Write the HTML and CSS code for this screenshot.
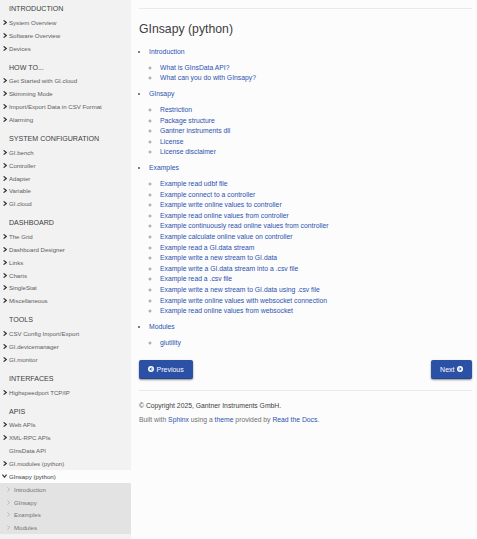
FILE: index.html
```html
<!DOCTYPE html>
<html lang="en">
<head>
  <meta charset="UTF-8">
  <title>GInsapy (python)</title>
  <link rel="stylesheet" href="styles.css">
</head>
<body>

  <!-- side navigation -->
  <nav class="side-nav">
    <p class="caption first">INTRODUCTION</p>
    <ul class="menu">
      <li><a href="#"><i class="chev"></i>System Overview</a></li>
      <li><a href="#"><i class="chev"></i>Software Overview</a></li>
      <li><a href="#"><i class="chev"></i>Devices</a></li>
    </ul>

    <p class="caption">HOW TO...</p>
    <ul class="menu">
      <li><a href="#"><i class="chev"></i>Get Started with GI.cloud</a></li>
      <li><a href="#"><i class="chev"></i>Skimming Mode</a></li>
      <li><a href="#"><i class="chev"></i>Import/Export Data in CSV Format</a></li>
      <li><a href="#"><i class="chev"></i>Alarming</a></li>
    </ul>

    <p class="caption">SYSTEM CONFIGURATION</p>
    <ul class="menu">
      <li><a href="#"><i class="chev"></i>GI.bench</a></li>
      <li><a href="#"><i class="chev"></i>Controller</a></li>
      <li><a href="#"><i class="chev"></i>Adapter</a></li>
      <li><a href="#"><i class="chev"></i>Variable</a></li>
      <li><a href="#"><i class="chev"></i>GI.cloud</a></li>
    </ul>

    <p class="caption">DASHBOARD</p>
    <ul class="menu">
      <li><a href="#"><i class="chev"></i>The Grid</a></li>
      <li><a href="#"><i class="chev"></i>Dashboard Designer</a></li>
      <li><a href="#"><i class="chev"></i>Links</a></li>
      <li><a href="#"><i class="chev"></i>Charts</a></li>
      <li><a href="#"><i class="chev"></i>SingleStat</a></li>
      <li><a href="#"><i class="chev"></i>Miscellaneous</a></li>
    </ul>

    <p class="caption">TOOLS</p>
    <ul class="menu">
      <li><a href="#"><i class="chev"></i>CSV Config Import/Export</a></li>
      <li><a href="#"><i class="chev"></i>GI.devicemanager</a></li>
      <li><a href="#"><i class="chev"></i>GI.monitor</a></li>
    </ul>

    <p class="caption">INTERFACES</p>
    <ul class="menu">
      <li><a href="#"><i class="chev"></i>Highspeedport TCP/IP</a></li>
    </ul>

    <p class="caption">APIS</p>
    <ul class="menu">
      <li><a href="#"><i class="chev"></i>Web APIs</a></li>
      <li><a href="#"><i class="chev"></i>XML-RPC APIs</a></li>
      <li><a href="#"><i class="chev blank"></i>GInsData API</a></li>
      <li><a href="#"><i class="chev"></i>GI.modules (python)</a></li>
      <li class="current">
        <a href="#"><i class="chev down"></i>GInsapy (python)</a>
        <ul class="sub">
          <li><a href="#"><i class="chev thin"></i>Introduction</a></li>
          <li><a href="#"><i class="chev thin"></i>GInsapy</a></li>
          <li><a href="#"><i class="chev thin"></i>Examples</a></li>
          <li><a href="#"><i class="chev thin"></i>Modules</a></li>
        </ul>
      </li>
    </ul>
  </nav>

  <main class="content">
    <hr class="top-rule">
    <h1>GInsapy (python)</h1>

    <ul class="toc">
      <li><a href="#">Introduction</a>
        <ul>
          <li><a href="#">What is GInsData API?</a></li>
          <li><a href="#">What can you do with GInsapy?</a></li>
        </ul>
      </li>
      <li><a href="#">GInsapy</a>
        <ul>
          <li><a href="#">Restriction</a></li>
          <li><a href="#">Package structure</a></li>
          <li><a href="#">Gantner instruments dll</a></li>
          <li><a href="#">License</a></li>
          <li><a href="#">License disclaimer</a></li>
        </ul>
      </li>
      <li><a href="#">Examples</a>
        <ul>
          <li><a href="#">Example read udbf file</a></li>
          <li><a href="#">Example connect to a controller</a></li>
          <li><a href="#">Example write online values to controller</a></li>
          <li><a href="#">Example read online values from controller</a></li>
          <li><a href="#">Example continuously read online values from controller</a></li>
          <li><a href="#">Example calculate online value on controller</a></li>
          <li><a href="#">Example read a GI.data stream</a></li>
          <li><a href="#">Example write a new stream to GI.data</a></li>
          <li><a href="#">Example write a GI.data stream into a .csv file</a></li>
          <li><a href="#">Example read a .csv file</a></li>
          <li><a href="#">Example write a new stream to GI.data using .csv file</a></li>
          <li><a href="#">Example write online values with websocket connection</a></li>
          <li><a href="#">Example read online values from websocket</a></li>
        </ul>
      </li>
      <li><a href="#">Modules</a>
        <ul>
          <li><a href="#">giutility</a></li>
        </ul>
      </li>
    </ul>

    <div class="pager">
      <a class="btn" href="#">
        <svg class="circ" viewBox="0 0 12 12"><circle cx="6" cy="6" r="6" fill="#fff"/><path d="M6.6 3 L3.6 6 L6.6 9 M3.8 6 H9" stroke="#2b51a6" stroke-width="1.8" fill="none"/></svg>
        Previous
      </a>
      <a class="btn" href="#">
        Next
        <svg class="circ" viewBox="0 0 12 12"><circle cx="6" cy="6" r="6" fill="#fff"/><path d="M5.4 3 L8.4 6 L5.4 9 M8.2 6 H3" stroke="#2b51a6" stroke-width="1.8" fill="none"/></svg>
      </a>
    </div>

    <hr class="foot-rule">
    <footer>
      <p class="copy">&copy; Copyright 2025, Gantner Instruments GmbH.</p>
      <p class="built">Built with <a href="#">Sphinx</a> using a <a href="#">theme</a> provided by <a href="#">Read the Docs</a>.</p>
    </footer>
  </main>

</body>
</html>
```

FILE: styles.css
```css
body {
  margin: 0;
  display: flex;
  min-height: 100vh;
  background: #fcfcfc;
  font-family: "Liberation Sans", Arial, sans-serif;
  color: #404040;
}
a { text-decoration: none; }

/* sidebar */
.side-nav {
  width: 131px;
  flex: none;
  background: #f2f2f2;
  padding-top: 2px;
}
.caption {
  margin: 6px 0 0;
  padding-left: 9px;
  line-height: 14px;
  font-size: 7.1px;
  color: #404040;
}
.caption.first { margin-top: 0; }
.menu, .sub { list-style: none; margin: 0; padding: 0; }
.menu a {
  display: flex;
  align-items: center;
  height: 12.85px;
  padding-left: 2px;
  font-size: 6.1px;
  color: #606060;
}
.chev {
  width: 7px;
  height: 12px;
  flex: none;
  background: no-repeat 1px center / 4px 5px url("data:image/svg+xml,%3Csvg xmlns='http://www.w3.org/2000/svg' viewBox='0 0 4 5'%3E%3Cpath d='M0.6 0.4 L3.2 2.5 L0.6 4.6' stroke='%23303030' stroke-width='1.2' fill='none'/%3E%3C/svg%3E");
}
.chev.blank { background: none; }
.chev.down {
  background-size: 5px 4px;
  background-position: 0 center;
  background-image: url("data:image/svg+xml,%3Csvg xmlns='http://www.w3.org/2000/svg' viewBox='0 0 5 4'%3E%3Cpath d='M0.4 0.6 L2.5 3.2 L4.6 0.6' stroke='%23303030' stroke-width='1.1' fill='none'/%3E%3C/svg%3E");
}
.chev.thin {
  width: 12px;
  background-position: 5px center;
  background-size: 3px 5px;
  background-image: url("data:image/svg+xml,%3Csvg xmlns='http://www.w3.org/2000/svg' viewBox='0 0 3 5'%3E%3Cpath d='M0.4 0.4 L2.6 2.5 L0.4 4.6' stroke='%23a0a0a0' stroke-width='0.6' fill='none'/%3E%3C/svg%3E");
}
.current > a { background: #fcfcfc; color: #404040; }
.sub { background: #e3e3e3; }
.sub a { color: #737373; }

/* page */
.content {
  flex: 1;
  padding: 0 5px 0 8px;
}
.top-rule, .foot-rule {
  border: 0;
  border-top: 1px solid #e8eaeb;
  margin: 8px 0 0;
}
h1 {
  font-size: 12.25px;
  font-weight: normal;
  line-height: 14.7px;
  margin: 12.6px 0 0;
  color: #404040;
}
.toc {
  margin: 10.4px 0 0;
  padding-left: 10px;
  font-size: 6.8px;
  line-height: 10.6px;
  list-style: disc;
}
.toc ul {
  margin: 5.3px 0;
  padding-left: 11px;
  list-style: circle;
}
.toc li::marker { color: #555; }
.toc ul li::marker { color: #999; }
.toc a, .built a { color: #2c52b0; }

.pager {
  display: flex;
  justify-content: space-between;
  margin-top: 11.5px;
}
.btn {
  display: flex;
  align-items: center;
  gap: 2.5px;
  height: 18.5px;
  padding: 0 9px;
  box-sizing: border-box;
  background: #2b51a6;
  color: #fff;
  font-size: 7px;
  border-radius: 2px;
  box-shadow: 0 1px 2px rgba(0, 0, 0, 0.45), inset 0 -1px 0 rgba(0, 0, 0, 0.12);
}
.circ { width: 6px; height: 6px; }
.foot-rule { margin-top: 11px; }
footer { font-size: 6.8px; line-height: 10.5px; }
footer p { margin: 0; }
.copy { margin-top: 10.6px; color: #404040; }
.built { margin-top: 3.5px; color: #707070; }
```
